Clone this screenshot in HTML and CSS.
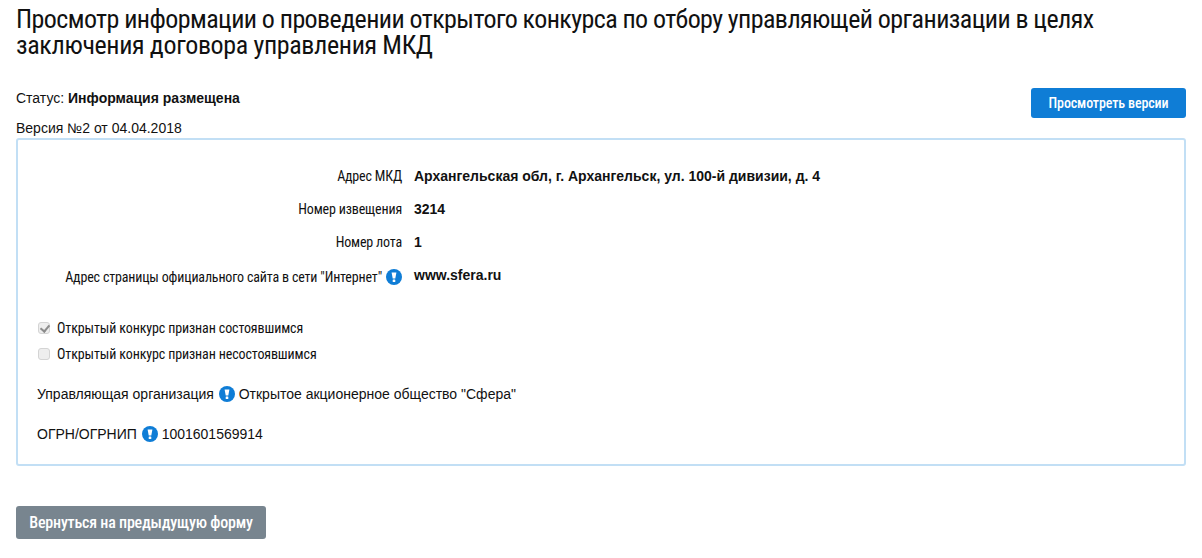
FILE: index.html
```html
<!DOCTYPE html>
<html lang="ru">
<head>
<meta charset="utf-8">
<title>Просмотр информации</title>
<link rel="stylesheet" href="styles.css">
</head>
<body>
<svg class="defs" width="0" height="0"><symbol id="info" viewBox="0 0 16 16"><circle cx="8" cy="8" r="8" fill="#0f7dd6"/><path d="M5.6 3.4h4.8L9.3 9.6H6.7z" fill="#fff"/><rect x="6.7" y="10.5" width="2.6" height="2.4" rx=".5" fill="#fff"/></symbol></svg>
<h1 class="title">Просмотр информации о проведении открытого конкурса по отбору управляющей организации в целях <span class="title-end">заключения договора управления МКД</span></h1>
<div class="status-row">
  <div class="status"><div class="status-line">Статус: <b>Информация размещена</b></div><div class="version">Версия №2 от 04.04.2018</div></div>
  <button class="btn btn-blue">Просмотреть версии</button>
</div>
<section class="box">
  <div class="fields">
    <div class="label">Адрес МКД</div><div class="value">Архангельская обл, г. Архангельск, ул. 100-й дивизии, д. 4</div>
    <div class="label">Номер извещения</div><div class="value">3214</div>
    <div class="label">Номер лота</div><div class="value">1</div>
    <div class="label label-icon">Адрес страницы официального сайта в сети "Интернет" <svg class="ico"><use href="#info"/></svg></div><div class="value">www.sfera.ru</div>
  </div>
  <label class="check"><input type="checkbox" checked disabled><span>Открытый конкурс признан состоявшимся</span></label>
  <label class="check"><input type="checkbox" disabled><span>Открытый конкурс признан несостоявшимся</span></label>
  <div class="info first">Управляющая организация <svg class="ico"><use href="#info"/></svg> Открытое акционерное общество "Сфера"</div>
  <div class="info">ОГРН/ОГРНИП <svg class="ico"><use href="#info"/></svg> 1001601569914</div>
</section>
<button class="btn btn-gray">Вернуться на предыдущую форму</button>
</body>
</html>
```
FILE: styles.css
```css
* { box-sizing: border-box; }
body { margin: 0; padding: 6px 16px 0; width: 1202px; height: 558px; overflow: hidden; background: #fff; color: #111; font-family: "Liberation Sans", Arial, sans-serif; font-size: 14px; }
.defs { position: absolute; }
.title { margin: 0; font-family: "Roboto Condensed", Roboto, sans-serif; font-weight: 400; font-size: 26px; letter-spacing: -0.58px; line-height: 26px; color: #111; }
.title-end { letter-spacing: -0.36px; }
.status-row { display: flex; justify-content: space-between; align-items: flex-start; margin-top: 30px; height: 50px; }
.status-line { margin-top: 2px; line-height: 17px; }
.version { margin-top: 13px; line-height: 17px; }
.btn { border: 0; border-radius: 3px; color: #fff; font-family: "Roboto Condensed", Roboto, sans-serif; font-weight: 500; }
.btn-blue { width: 155px; height: 30px; background: #0f7dd6; font-size: 14px; letter-spacing: -0.12px; padding: 0; }
.btn-gray { display: block; width: 250px; height: 33px; margin-top: 40px; background: #78858f; font-size: 16px; letter-spacing: -0.2px; padding: 0; }
.box { height: 328px; border: 2px solid #c2dff5; border-radius: 3px; padding: 28px 19px 0; }
.fields { display: grid; grid-template-columns: 365px 1fr; column-gap: 12px; row-gap: 16px; margin-bottom: 29px; }
.label { font-family: "Roboto Condensed", Roboto, sans-serif; font-size: 14px; letter-spacing: -0.17px; line-height: 17px; text-align: right; }
.label-icon { padding-top: 2px; }
.value { font-weight: 700; line-height: 17px; }
.ico { width: 16px; height: 16px; vertical-align: -3px; margin-left: 1px; }
.check { display: flex; align-items: center; height: 26px; font-family: "Roboto Condensed", Roboto, sans-serif; font-size: 14px; letter-spacing: -0.12px; }
.check input { appearance: none; position: relative; width: 12px; height: 12px; margin: 0 7px 0 1px; background: #eee; border: 1px solid #d4d4d4; border-radius: 3px; }
.check input:checked::after { content: ""; position: absolute; left: 3px; top: 0; width: 4px; height: 7px; border: solid #8c8c8c; border-width: 0 2px 2px 0; transform: rotate(40deg); }
.info { margin-top: 23px; line-height: 17px; }
.info.first { margin-top: 19px; }
```
